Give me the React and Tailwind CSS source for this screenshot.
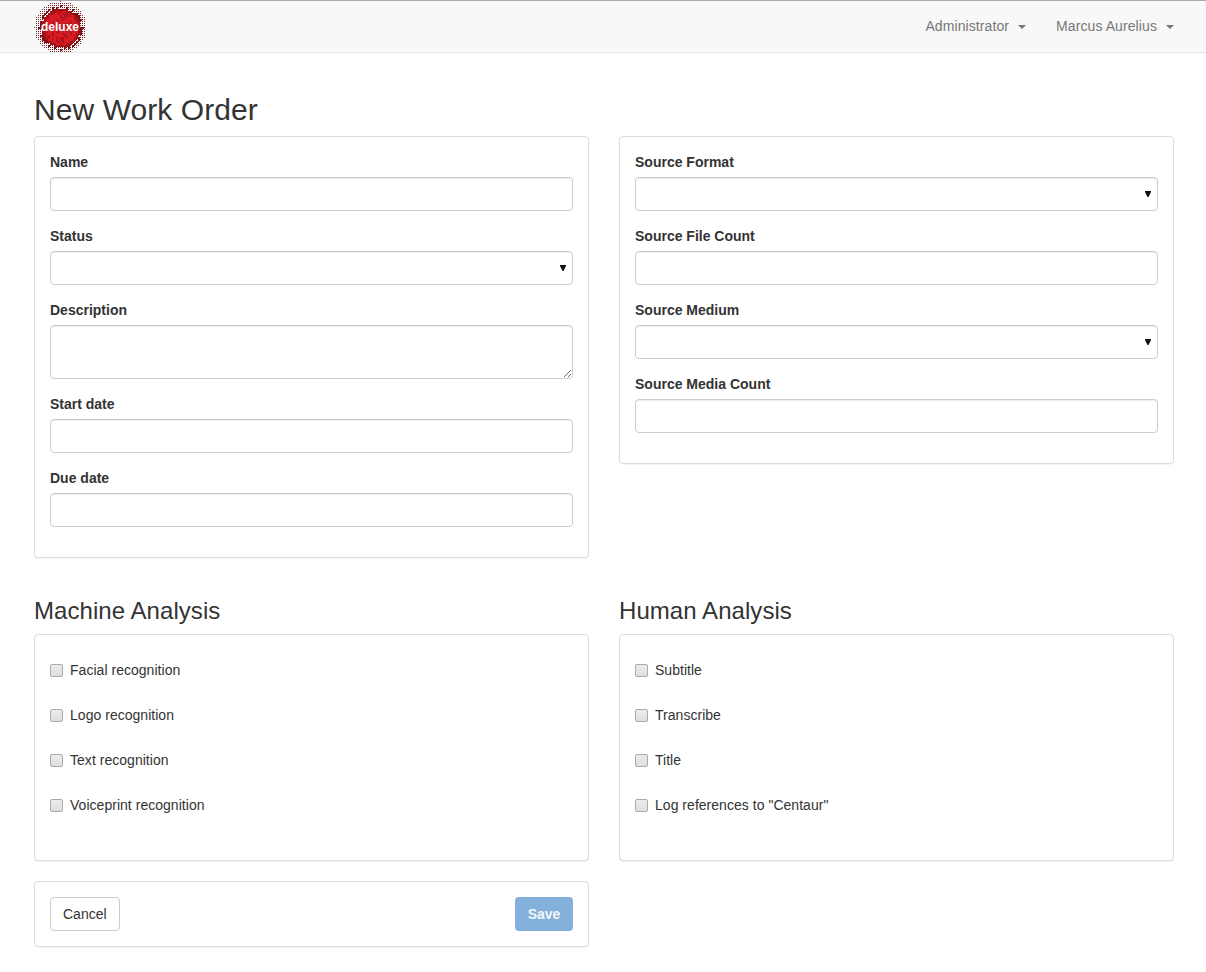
const FONT = "font-['Liberation_Sans',Arial,sans-serif]";

const fieldClass =
  'block w-full h-[34px] rounded border border-[#ccc] bg-white px-3 text-sm text-[#555] shadow-[inset_0_1px_1px_rgba(0,0,0,0.075)]';

function Logo() {
  // halftone disc: mottled red core, dots fade out towards the rim
  const dots = [];
  for (let y = -26; y <= 26; y += 2) {
    for (let x = -26; x <= 26; x += 2) {
      const d = Math.sqrt(x * x + y * y);
      if (d > 26) continue;
      const noise = Math.abs(Math.sin(x * 12.9898 + y * 78.233) * 43758.5453) % 1;
      const blotch = Math.sin(x * 0.7 + 1) * Math.cos(y * 0.6 - x * 0.3);
      let fill = '#d81a22';
      let size = 2;
      if (d > 24) {
        fill = '#8a2c32';
        size = 1;
      } else if (d > 22) {
        fill = '#70141a';
        size = 1;
      } else if (d > 19.5) {
        fill = '#7d1118';
        size = noise > 0.4 ? 2 : 1;
      } else if (d > 17) {
        fill = '#a31219';
      } else if (blotch > 0.35 || noise > 0.8) {
        fill = '#b5141c';
      }
      dots.push(
        <rect key={`${x}_${y}`} x={x + 26} y={y + 26} width={size} height={size} fill={fill} />
      );
    }
  }
  return (
    <svg className="self-start" width="52" height="52" viewBox="0 0 52 52">
      {dots}
      <text x="26" y="30" textAnchor="middle" fontSize="12" fontWeight="700" fill="#fff" fontFamily="Liberation Sans, Arial, sans-serif">
        deluxe
      </text>
    </svg>
  );
}

function NavItem({ children }) {
  return (
    <div className="flex items-center text-sm leading-5 tracking-[0.09px] text-[#777]">
      <span>{children}</span>
      <span className="ml-[9px] mt-[2px] inline-block h-0 w-0 border-x-4 border-t-4 border-x-transparent border-t-[#777]"></span>
    </div>
  );
}

function Field({ label, children }) {
  return (
    <div className="mb-[15px]">
      <label className="mb-[5px] block text-sm font-bold leading-5 text-[#333]">{label}</label>
      {children}
    </div>
  );
}

function TextInput() {
  return <input type="text" className={fieldClass} />;
}

function SelectInput() {
  return (
    <div className="relative">
      <select className={`${fieldClass} appearance-none`}>
        <option></option>
      </select>
      <svg className="absolute right-[7px] top-[14px]" width="6" height="6" viewBox="0 0 6 6">
        <path d="M0 0H6V1L3.5 6H2.5L0 1Z" fill="#111" />
      </svg>
    </div>
  );
}

function Panel({ className = '', children }) {
  return (
    <div className={`rounded border border-[#ddd] bg-white p-[15px] shadow-[0_1px_1px_rgba(0,0,0,0.05)] ${className}`}>
      {children}
    </div>
  );
}

function CheckList({ items }) {
  return (
    <Panel>
      <div className="flex flex-col gap-[25px] pb-[30px] pt-[10px]">
        {items.map((item) => (
          <label key={item} className="flex items-center gap-[7px] text-sm leading-5 tracking-[0.03px] text-[#333]">
            <input
              type="checkbox"
              className="h-[13px] w-[13px] appearance-none rounded-[2px] border border-[#aaa] bg-gradient-to-b from-[#ececec] to-[#dedede]"
            />
            {item}
          </label>
        ))}
      </div>
    </Panel>
  );
}

export default function App() {
  return (
    <div className={`min-h-[972px] bg-white ${FONT}`}>
      <nav className="flex h-[53px] items-center justify-between border-b border-t border-b-[#e7e7e7] border-t-[#aaa] bg-[#f8f8f8] pl-[34px] pr-[32px]">
        <Logo />
        <div className="mt-[15px] flex gap-[30px] self-start">
          <NavItem>Administrator</NavItem>
          <NavItem>Marcus Aurelius</NavItem>
        </div>
      </nav>

      <main className="pl-[34px] pr-[32px] pt-[40px]">
        <h1 className="mb-[10px] text-[30px] font-normal leading-[33px] tracking-[0.07px] text-[#333]">New Work Order</h1>

        <div className="grid grid-cols-2 items-start gap-x-[30px]">
          <Panel>
            <Field label="Name"><TextInput /></Field>
            <Field label="Status"><SelectInput /></Field>
            <Field label="Description">
              <textarea className={`${fieldClass} h-[54px] py-1.5`}></textarea>
            </Field>
            <Field label="Start date"><TextInput /></Field>
            <Field label="Due date"><TextInput /></Field>
          </Panel>
          <Panel>
            <Field label="Source Format"><SelectInput /></Field>
            <Field label="Source File Count"><TextInput /></Field>
            <Field label="Source Medium"><SelectInput /></Field>
            <Field label="Source Media Count"><TextInput /></Field>
          </Panel>
        </div>

        <div className="mt-[40px] grid grid-cols-2 items-start gap-x-[30px]">
          <div>
            <h2 className="mb-[10px] text-2xl font-normal leading-[26px] tracking-[0.06px] text-[#333]">Machine Analysis</h2>
            <CheckList items={['Facial recognition', 'Logo recognition', 'Text recognition', 'Voiceprint recognition']} />
          </div>
          <div>
            <h2 className="mb-[10px] text-2xl font-normal leading-[26px] tracking-[0.06px] text-[#333]">Human Analysis</h2>
            <CheckList items={['Subtitle', 'Transcribe', 'Title', 'Log references to "Centaur"']} />
          </div>
        </div>

        <div className="mt-[20px] grid grid-cols-2 gap-x-[30px]">
          <Panel className="flex items-center justify-between">
            <button className="h-[34px] rounded border border-[#ccc] bg-white px-3 text-sm text-[#333]">Cancel</button>
            <button className="h-[34px] w-[58px] rounded bg-[#84b0dc] text-sm font-bold text-[#f2f6fb]">
              Save
            </button>
          </Panel>
        </div>
      </main>
    </div>
  );
}
